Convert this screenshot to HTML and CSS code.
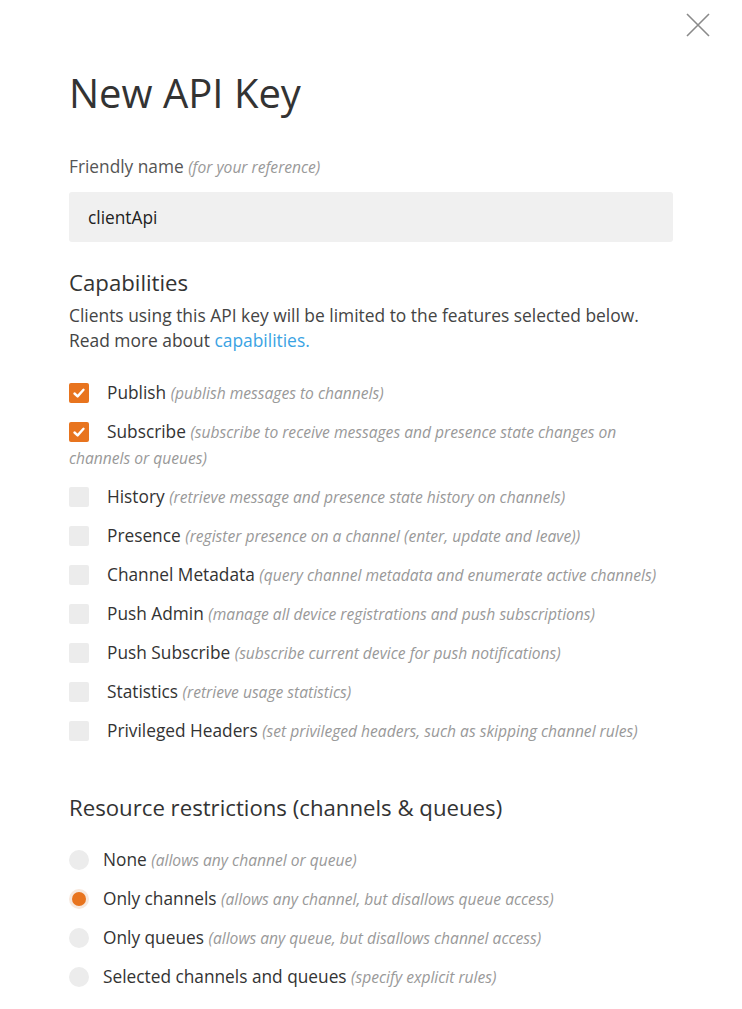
FILE: index.html
```html
<!DOCTYPE html>
<html>
<head>
<meta charset="utf-8">
<link rel="stylesheet" href="styles.css">
</head>
<body>
<div class="dialog">
  <button class="close" aria-label="Close">
    <svg width="24" height="24" viewBox="0 0 24 24"><path d="M1 1 L23 23 M23 1 L1 23" stroke="#8a8a8a" stroke-width="1.6" fill="none"/></svg>
  </button>
  <h1 class="title">New API Key</h1>
  <label class="field-label">Friendly name <em>(for your reference)</em></label>
  <div class="input">clientApi</div>

  <h2 class="section">Capabilities</h2>
  <p class="desc">Clients using this API key will be limited to the features selected below.<br>Read more about <a href="#">capabilities.</a></p>

  <ul class="checks">
    <li><span class="cb on"><svg viewBox="0 0 20 20" width="20" height="20"><path d="M5.5 10.5 L8.6 13.4 L14.5 6.8" stroke="#fff" stroke-width="2.4" fill="none" stroke-linecap="round" stroke-linejoin="round"/></svg></span><span class="name">Publish</span> <em>(publish messages to channels)</em></li>
    <li><span class="cb on"><svg viewBox="0 0 20 20" width="20" height="20"><path d="M5.5 10.5 L8.6 13.4 L14.5 6.8" stroke="#fff" stroke-width="2.4" fill="none" stroke-linecap="round" stroke-linejoin="round"/></svg></span><span class="name">Subscribe</span> <em>(subscribe to receive messages and presence state changes on</em><br><em>channels or queues)</em></li>
    <li><span class="cb"></span><span class="name">History</span> <em>(retrieve message and presence state history on channels)</em></li>
    <li><span class="cb"></span><span class="name">Presence</span> <em>(register presence on a channel (enter, update and leave))</em></li>
    <li><span class="cb"></span><span class="name">Channel Metadata</span> <em>(query channel metadata and enumerate active channels)</em></li>
    <li><span class="cb"></span><span class="name">Push Admin</span> <em>(manage all device registrations and push subscriptions)</em></li>
    <li><span class="cb"></span><span class="name">Push Subscribe</span> <em>(subscribe current device for push notifications)</em></li>
    <li><span class="cb"></span><span class="name">Statistics</span> <em>(retrieve usage statistics)</em></li>
    <li><span class="cb"></span><span class="name">Privileged Headers</span> <em>(set privileged headers, such as skipping channel rules)</em></li>
  </ul>

  <h2 class="section section-2">Resource restrictions (channels &amp; queues)</h2>
  <ul class="radios">
    <li><span class="rb"></span><span class="name">None</span> <em>(allows any channel or queue)</em></li>
    <li><span class="rb on"></span><span class="name">Only channels</span> <em>(allows any channel, but disallows queue access)</em></li>
    <li><span class="rb"></span><span class="name">Only queues</span> <em>(allows any queue, but disallows channel access)</em></li>
    <li><span class="rb"></span><span class="name">Selected channels and queues</span> <em>(specify explicit rules)</em></li>
  </ul>
</div>
</body>
</html>
```

FILE: styles.css
```css
* { box-sizing: border-box; }
html, body { margin: 0; padding: 0; background: #fff; }
body {
  font-family: "Open Sans", Lato, sans-serif;
  color: #333;
  font-size: 17.3px;
}
.dialog {
  position: relative;
  padding: 70px 69px 0 69px;
  width: 742px;
  height: 1009px;
  overflow: hidden;
}
.close {
  position: absolute;
  top: 13px;
  right: 32px;
  width: 24px;
  height: 24px;
  padding: 0;
  border: 0;
  background: none;
}
.close svg { display: block; }
.title {
  margin: 0;
  font-size: 40px;
  line-height: 46px;
  font-weight: 400;
  color: #333;
}
.field-label {
  display: block;
  margin-top: 39px;
  line-height: 24px;
  color: #555;
}
em {
  font-style: italic;
  color: #999;
  font-size: 15.6px;
  line-height: 1;
}
.input {
  margin-top: 13px;
  width: 604px;
  height: 50px;
  background: #f0f0f0;
  border-radius: 3px;
  padding: 0 19px;
  display: flex;
  align-items: center;
  color: #222;
}
.section {
  margin: 26px 0 0;
  font-size: 22.2px;
  line-height: 30px;
  font-weight: 400;
  color: #333;
}
.desc {
  margin: 5px 0 0;
  line-height: 25px;
  font-size: 17.4px;
  color: #444;
}
.desc a { color: #3aa3e3; text-decoration: none; }
.checks, .radios {
  list-style: none;
  margin: 0;
  padding: 0;
}
.checks { margin-top: 27px; width: 604px; }
.checks li {
  line-height: 26px;
  margin-bottom: 13px;
}
.cb {
  display: inline-block;
  width: 20px;
  height: 20px;
  border-radius: 2px;
  background: #ececec;
  vertical-align: -4px;
  margin-right: 18px;
}
.cb svg { display: block; }
.cb.on { background: #e8741e; }
.name { color: #333; }
.section-2 { margin-top: 49px; }
.radios { margin-top: 24px; }
.radios li {
  line-height: 26px;
  margin-bottom: 13px;
}
.rb {
  display: inline-block;
  width: 20px;
  height: 20px;
  border-radius: 50%;
  background: #ececec;
  vertical-align: -4px;
  margin-right: 14px;
  position: relative;
}
.rb.on { background: #f7e8dd; }
.rb.on::after {
  content: "";
  position: absolute;
  left: 3px;
  top: 3px;
  width: 14px;
  height: 14px;
  border-radius: 50%;
  background: #e8741e;
}
```
